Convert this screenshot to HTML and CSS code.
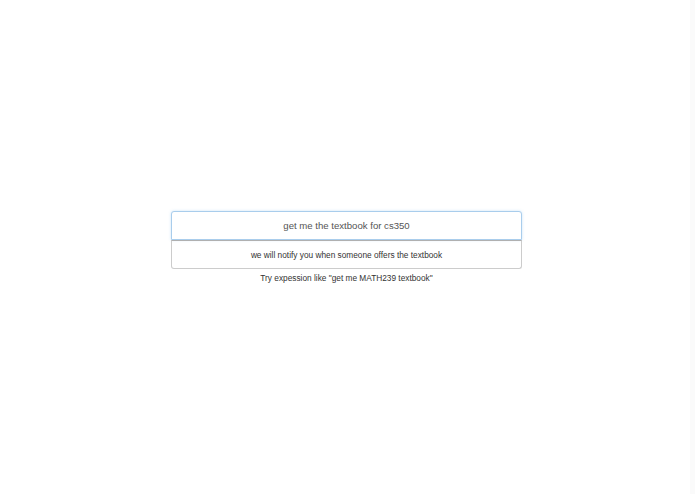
FILE: index.html
```html
<!DOCTYPE html>
<html>
<head>
<meta charset="utf-8">
<link rel="stylesheet" href="styles.css">
</head>
<body>
<div class="page">
  <div class="box">
    <input class="query" type="text" value="get me the textbook for cs350">
    <div class="result">we will notify you when someone offers the textbook</div>
    <div class="hint">Try expession like "get me MATH239 textbook"</div>
  </div>
</div>
<div class="scrollbar"></div>
</body>
</html>
```
FILE: styles.css
```css
html, body {
  margin: 0;
  padding: 0;
  background: #ffffff;
  font-family: "Liberation Sans", Arial, Helvetica, sans-serif;
}
.page {
  width: 695px;
  height: 494px;
  display: flex;
  justify-content: flex-start;
  padding-top: 211px;
  padding-left: 171px;
  box-sizing: border-box;
}
.box {
  width: 351px;
  display: flex;
  flex-direction: column;
}
.query {
  box-sizing: border-box;
  width: 100%;
  height: 29px;
  margin: 0;
  border: 1px solid #a9cdec;
  border-radius: 3px 3px 0 0;
  box-shadow: 0 0 3px rgba(102, 175, 233, 0.35);
  text-align: center;
  font-family: "Liberation Sans", Arial, sans-serif;
  font-size: 9.6px;
  color: #555555;
  outline: none;
  padding: 0 8px;
}
.result {
  box-sizing: border-box;
  height: 29px;
  border: 1px solid #cccccc;
  border-top: 1px solid #b0b0b0;
  border-radius: 0 0 3px 3px;
  display: flex;
  align-items: center;
  justify-content: center;
  font-size: 8.3px;
  color: #333333;
}
.hint {
  text-align: center;
  font-size: 8.3px;
  color: #333333;
  margin-top: 4px;
}
.scrollbar {
  position: absolute;
  top: 0;
  right: 0;
  width: 5px;
  height: 494px;
  background: #fafafa;
}
```
